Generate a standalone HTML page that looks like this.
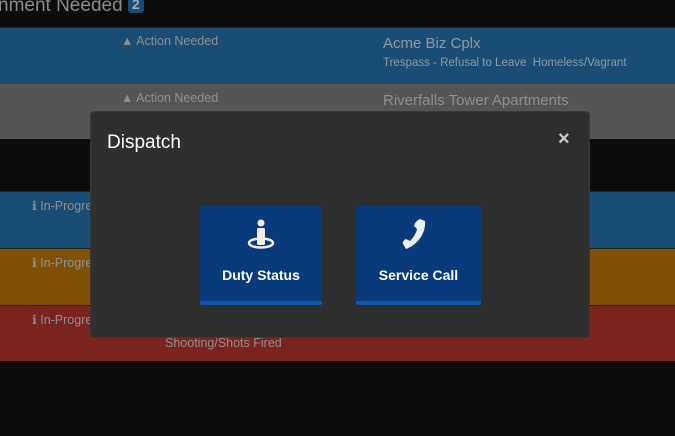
<!DOCTYPE html>
<html><head><style>
body{margin:0;width:675px;height:436px;background:#0c0c0c;font-family:"Liberation Sans",sans-serif;position:relative;overflow:hidden}
.a{position:absolute}
.row{position:absolute;left:0;width:675px}
.t{color:#8f8f8f;font-size:12.5px}
</style></head><body>
<div class="a" style="left:-2px;top:-5px;color:#8c8c8c;font-size:19px">nment Needed <span style="display:inline-block;background:#1a4d73;color:#9aaab8;font-size:14px;font-weight:bold;padding:1px 4px;border-radius:3px;vertical-align:2px">2</span></div>
<div class="row" style="top:27px;height:56px;background:#1a4d73;border-top:1px solid #222"></div>
<div class="row" style="top:84px;height:55px;background:#555"></div>
<div class="row" style="top:191px;height:56px;background:#1a4d73;border-top:1px solid #222"></div>
<div class="row" style="top:248px;height:56px;background:#7f5106;border-top:1px solid #222"></div>
<div class="row" style="top:305px;height:55px;background:#7b231e;border-top:1px solid #222"></div>
<div class="a t" style="left:121px;top:34px">▲ Action Needed</div>
<div class="a t" style="left:121px;top:91px">▲ Action Needed</div>
<div class="a" style="left:383px;top:35px;color:#8e9aa6;font-size:15px">Acme Biz Cplx</div>
<div class="a" style="left:383px;top:57px;color:#8e9aa6;font-size:11.5px">Trespass - Refusal to Leave&nbsp; Homeless/Vagrant</div>
<div class="a" style="left:383px;top:92px;color:#8e8e8e;font-size:15px">Riverfalls Tower Apartments</div>
<div class="a t" style="left:32px;top:198px">ℹ In-Progre</div>
<div class="a t" style="left:32px;top:255px">ℹ In-Progre</div>
<div class="a t" style="left:32px;top:312px">ℹ In-Progre</div>
<div class="a t" style="left:165px;top:336px">Shooting/Shots Fired</div>
<div class="a" style="left:90px;top:111px;width:498px;height:225px;background:#2f2f2f;border:1px solid #3a3a3a;border-radius:4px">
 <div class="a" style="left:16px;top:20px;color:#fff;font-size:19px">Dispatch</div>
 <div class="a" style="left:467px;top:16px;color:#ccc;font-size:20px;font-weight:bold">×</div>
 <div class="a" style="left:109px;top:94px;width:122px;height:95px;background:#083a7c;border-bottom:4px solid #1056b3;border-radius:2px;text-align:center">
  <svg class="a" style="left:44px;top:12px" width="34" height="32" viewBox="0 0 34 32"><circle cx="17" cy="5" r="3.5" fill="#eee"/><rect x="13" y="10" width="8" height="17" rx="1.5" fill="#eee"/><ellipse cx="17" cy="25" rx="12" ry="4.5" fill="none" stroke="#eee" stroke-width="2.5"/></svg>
  <div class="a" style="left:0;width:122px;top:61px;color:#fff;font-size:14px;font-weight:bold">Duty Status</div>
 </div>
 <div class="a" style="left:265px;top:94px;width:125px;height:95px;background:#083a7c;border-bottom:4px solid #1056b3;border-radius:2px">
  <svg class="a" style="left:45px;top:12px" width="26" height="32" viewBox="0 0 26 32"><path d="M19 1 L24 3 C25 14 18 26 5 31 L2 26 C1 24 3 22 5 21 L9 23 C13 19 15 15 16 11 L13 8 C14 5 15 3 19 1Z" fill="#eee"/></svg>
  <div class="a" style="left:0;width:125px;top:61px;color:#fff;font-size:14px;font-weight:bold;text-align:center">Service Call</div>
 </div>
</div>
</body></html>
